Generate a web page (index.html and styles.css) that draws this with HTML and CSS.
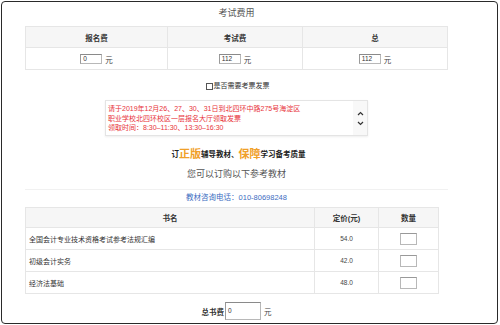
FILE: index.html
```html
<!DOCTYPE html>
<html lang="zh">
<head>
<meta charset="utf-8">
<link rel="stylesheet" href="styles.css">
</head>
<body>
<div class="frame">
  <div class="page">
    <h1 class="title">考试费用</h1>
    <table class="fee">
      <tr><th class="c1">报名费</th><th class="c2">考试费</th><th class="c3">总</th></tr>
      <tr>
        <td><span class="inp">0</span><span class="yuan">元</span></td>
        <td><span class="inp">112</span><span class="yuan">元</span></td>
        <td><span class="inp">112</span><span class="yuan">元</span></td>
      </tr>
    </table>
    <div class="invoice"><span class="cb"></span>是否需要考票发票</div>
    <div class="notice">
      <div class="notice-text">请于2019年12月26、27、30、31日到北四环中路275号海淀区<br>职业学校北四环校区一层报名大厅领取发票<br>领取时间：8:30–11:30、13:30–16:30</div>
      <div class="scroll">
        <svg width="7" height="5" viewBox="0 0 7 5"><path d="M1 4 L3.5 1.5 L6 4" fill="none" stroke="#333" stroke-width="1.2"/></svg>
        <svg width="7" height="5" viewBox="0 0 7 5"><path d="M1 1 L3.5 3.5 L6 1" fill="none" stroke="#333" stroke-width="1.2"/></svg>
      </div>
    </div>
    <div class="banner">订<span class="big">正版</span>辅导教材、<span class="big">保障</span>学习备考质量</div>
    <p class="sub">您可以订购以下参考教材</p>
    <p class="phone">教材咨询电话：010-80698248</p>
    <table class="books">
      <tr><th class="c-name">书名</th><th class="c-price">定价(元)</th><th class="c-qty">数量</th></tr>
      <tr><td class="name">全国会计专业技术资格考试参考法规汇编</td><td>54.0</td><td><span class="qty"></span></td></tr>
      <tr><td class="name">初级会计实务</td><td>42.0</td><td><span class="qty"></span></td></tr>
      <tr><td class="name">经济法基础</td><td>48.0</td><td><span class="qty"></span></td></tr>
    </table>
    <div class="total"><b>总书费</b><span class="inp big-inp">0</span><span class="yuan">元</span></div>
  </div>
</div>
</body>
</html>
```
FILE: styles.css
```css
html, body {
  margin: 0;
  padding: 0;
  background: #fff;
}
body {
  font-family: "Liberation Sans", "Noto Sans CJK SC", sans-serif;
  color: #333;
}
.frame {
  width: 495px;
  height: 321px;
  margin: 1px 0 0 1px;
  border: 1px solid #2a2a2a;
  border-radius: 4px;
  overflow: hidden;
}
.page {
  width: 423px;
  padding-left: 23px;
  text-align: center;
}
.title {
  margin: 0;
  padding-top: 5px;
  font-size: 9px;
  line-height: 12px;
  font-weight: normal;
  color: #555;
}
table {
  border-collapse: collapse;
}
th, td {
  border: 1px solid #e6e6e6;
  padding: 0;
  color: #333;
}
th {
  background: #f6f6f6;
  font-weight: bold;
  font-size: 7.5px;
}
.fee {
  margin-top: 7px;
  width: 423px;
}
.fee th { height: 20px; }
.fee td { height: 21px; }
.c1 { width: 141px; }
.c2 { width: 134px; }
.inp {
  display: inline-block;
  vertical-align: middle;
  width: 18px;
  height: 8px;
  line-height: 8px;
  padding-left: 2px;
  text-align: left;
  font-size: 6.5px;
  color: #333;
  border: 1px solid #b8b8b8;
  border-top-color: #8a8a8a;
  border-left-color: #9a9a9a;
  background: #fff;
}
.yuan {
  vertical-align: middle;
  margin-left: 3px;
  font-size: 7.5px;
  color: #444;
}
.invoice {
  margin-top: 11px;
  font-size: 7px;
  line-height: 10px;
  color: #333;
  display: flex;
  justify-content: center;
  align-items: center;
  padding-left: 2px;
}
.cb {
  display: inline-block;
  width: 5px;
  height: 5px;
  border: 1px solid #555;
  margin-right: 1px;
  background: #fff;
}
.notice {
  display: flex;
  margin: 9px 0 0 80px;
  width: 261px;
  height: 34px;
  border: 1px solid #e4e4e4;
  box-shadow: 0 1px 2px rgba(0,0,0,0.07);
  text-align: left;
}
.notice-text {
  flex: 1;
  padding: 3px 0 0 2px;
  font-size: 7px;
  line-height: 9.5px;
  color: #e8333a;
  white-space: nowrap;
}
.scroll {
  width: 14px;
  display: flex;
  flex-direction: column;
  align-items: center;
  justify-content: center;
  gap: 5px;
  background: #f8f8f8;
}
.scroll svg {
  display: block;
}
.banner {
  margin-top: 10px;
  height: 16px;
  line-height: 16px;
  font-size: 7.5px;
  font-weight: bold;
  color: #222;
  padding-left: 4px;
}
.big {
  font-size: 11px;
  color: #f0a028;
  vertical-align: -1px;
}
.sub {
  margin: 6px 0 0 0;
  font-size: 9px;
  line-height: 12px;
  color: #555;
}
.phone {
  margin: 9px 0 0 0;
  border-top: 1px solid #f1f1f1;
  padding-top: 3px;
  font-size: 7.5px;
  line-height: 10px;
  color: #3d6dbf;
}
.books {
  margin-top: 4px;
  width: 414px;
}
.books th { height: 19px; }
.books td { height: 21px; }
.c-name { width: 288px; }
.c-price { width: 63px; }
.books td {
  font-size: 6.5px;
  color: #444;
}
.books td.name {
  text-align: left;
  padding-left: 3px;
  font-size: 7px;
  color: #333;
}
.qty {
  display: inline-block;
  vertical-align: middle;
  width: 15px;
  height: 10px;
  border: 1px solid #b8b8b8;
  border-top-color: #999;
}
.total {
  margin-top: 8px;
  display: flex;
  justify-content: center;
  align-items: center;
  font-size: 7.5px;
  color: #333;
}
.total b {
  margin-right: 1px;
}
.big-inp {
  width: 32px;
  height: 16px;
  line-height: 16px;
  padding-left: 2px;
}
```
